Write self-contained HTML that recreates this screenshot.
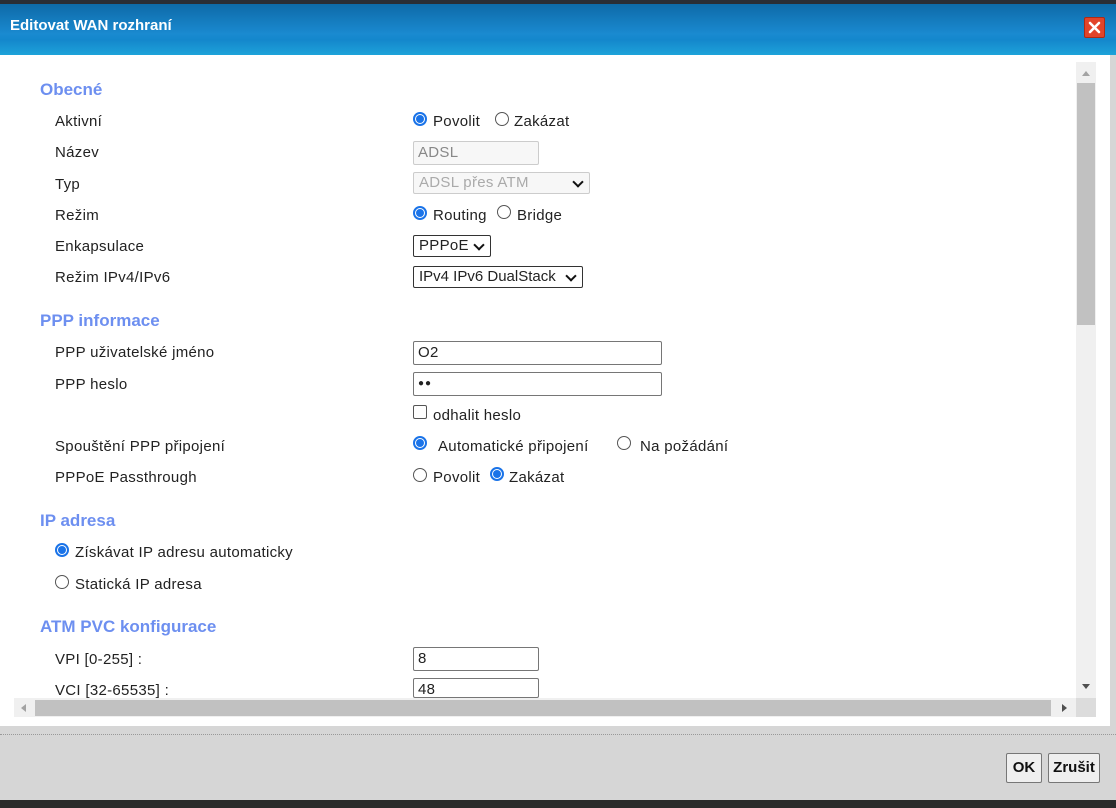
<!DOCTYPE html>
<html><head><meta charset="utf-8"><style>
*{margin:0;padding:0;box-sizing:border-box}
body{width:1116px;height:808px;position:relative;overflow:hidden;background:#d6d6d6;font-family:"Liberation Sans",sans-serif;font-size:15px;letter-spacing:0.3px;color:#222}
.a{position:absolute;white-space:nowrap}
.h{position:absolute;color:#6d8ff0;font-weight:bold;font-size:17px;letter-spacing:0}
.r{position:absolute;width:14px;height:14px;border:1px solid #555;border-radius:50%;background:#fff}
.r.on{border:2px solid #1a73e8}
.r.on::after{content:"";position:absolute;left:1px;top:1px;width:8px;height:8px;border-radius:50%;background:#1a73e8}
.in{position:absolute;height:24px;border:1px solid #767676;background:#fff;padding:2px 4px;line-height:18px;border-radius:2px}
.sel{position:absolute;height:22px;border:1px solid #333;background:#fff;padding:1px 5px;line-height:18px;border-radius:2px}
.sel::after{content:"";position:absolute;right:7px;top:5px;width:6px;height:6px;border-right:2px solid #111;border-bottom:2px solid #111;transform:rotate(45deg)}
.btn{position:absolute;height:30px;border:1px solid #777;background:#efefef;border-radius:2px;font-weight:bold;font-size:15px;letter-spacing:0;text-align:center;line-height:28px;color:#111}
</style></head><body>
<div class="a" style="left:0;top:0;width:1116px;height:4px;background:#2a2e36"></div>
<div class="a" style="left:0;top:4px;width:1116px;height:51px;background:linear-gradient(#0e6aa8 0,#1a8ad0 30px,#1487cc 36px,#1fa8dc 54px)"></div>
<div class="a" style="left:10px;top:17px;color:#fff;font-weight:bold;font-size:15px;letter-spacing:0">Editovat WAN rozhraní</div>
<div class="a" style="left:1084px;top:17px;width:21px;height:21px;background:#e2442a;border:1px solid #b02a14;border-radius:2px"><svg width="19" height="19" viewBox="0 0 19 19"><path d="M5 5L14 14M14 5L5 14" stroke="#fff" stroke-width="2.6" stroke-linecap="round"/></svg></div>
<div class="a" style="left:0;top:55px;width:1110px;height:671px;background:#fff"></div>
<div class="a" style="left:1076px;top:62px;width:20px;height:636px;background:#f0f0f0"></div>
<div class="a" style="left:1077px;top:83px;width:18px;height:242px;background:#c1c1c1"></div>
<div class="a" style="left:1082px;top:71px;border:4px solid transparent;border-bottom:5px solid #a3a3a3;border-top:0"></div>
<div class="a" style="left:1082px;top:684px;border:4px solid transparent;border-top:5px solid #505050;border-bottom:0"></div>
<div class="a" style="left:14px;top:698px;width:1062px;height:19px;background:#f0f0f0"></div>
<div class="a" style="left:35px;top:700px;width:1016px;height:16px;background:#c1c1c1"></div>
<div class="a" style="left:21px;top:704px;border:4px solid transparent;border-right:5px solid #a3a3a3;border-left:0"></div>
<div class="a" style="left:1062px;top:704px;border:4px solid transparent;border-left:5px solid #505050;border-right:0"></div>
<div class="a" style="left:1076px;top:698px;width:20px;height:19px;background:#dcdcdc"></div>
<div class="a" style="left:0;top:734px;width:1116px;border-top:1px dotted #999"></div>
<div class="a" style="left:0;top:800px;width:1116px;height:8px;background:#2b2b2b"></div>

<div class="h" style="left:40px;top:80px">Obecné</div>
<div class="a" style="left:55px;top:113px">Aktivní</div>
<div class="r on" style="left:413px;top:112px"></div><div class="a" style="left:433px;top:113px">Povolit</div>
<div class="r" style="left:495px;top:112px"></div><div class="a" style="left:514px;top:113px">Zakázat</div>
<div class="a" style="left:55px;top:144px">Název</div>
<div class="in" style="left:413px;top:141px;width:126px;background:#f7f7f7;border-color:#ccc;color:#888">ADSL</div>
<div class="a" style="left:55px;top:176px">Typ</div>
<div class="sel" style="left:413px;top:172px;width:177px;background:#f7f7f7;border-color:#ccc;color:#aaa">ADSL přes ATM</div>
<div class="a" style="left:55px;top:207px">Režim</div>
<div class="r on" style="left:413px;top:206px"></div><div class="a" style="left:433px;top:207px">Routing</div>
<div class="r" style="left:497px;top:205px"></div><div class="a" style="left:517px;top:207px">Bridge</div>
<div class="a" style="left:55px;top:238px">Enkapsulace</div>
<div class="sel" style="left:413px;top:235px;width:78px">PPPoE</div>
<div class="a" style="left:55px;top:269px">Režim IPv4/IPv6</div>
<div class="sel" style="left:413px;top:266px;width:170px;letter-spacing:0">IPv4 IPv6 DualStack</div>

<div class="h" style="left:40px;top:311px">PPP informace</div>
<div class="a" style="left:55px;top:344px">PPP uživatelské jméno</div>
<div class="in" style="left:413px;top:341px;width:249px">O2</div>
<div class="a" style="left:55px;top:376px">PPP heslo</div>
<div class="in" style="left:413px;top:372px;width:249px;font-size:10px;letter-spacing:1px">●●</div>
<div class="a" style="left:413px;top:405px;width:14px;height:14px;border:1px solid #555;border-radius:2px;background:#fff"></div>
<div class="a" style="left:433px;top:407px">odhalit heslo</div>
<div class="a" style="left:55px;top:438px">Spouštění PPP připojení</div>
<div class="r on" style="left:413px;top:436px"></div><div class="a" style="left:438px;top:438px">Automatické připojení</div>
<div class="r" style="left:617px;top:436px"></div><div class="a" style="left:640px;top:438px">Na požádání</div>
<div class="a" style="left:55px;top:469px">PPPoE Passthrough</div>
<div class="r" style="left:413px;top:468px"></div><div class="a" style="left:433px;top:469px">Povolit</div>
<div class="r on" style="left:490px;top:467px"></div><div class="a" style="left:509px;top:469px">Zakázat</div>

<div class="h" style="left:40px;top:511px">IP adresa</div>
<div class="r on" style="left:55px;top:543px"></div><div class="a" style="left:75px;top:544px">Získávat IP adresu automaticky</div>
<div class="r" style="left:55px;top:575px"></div><div class="a" style="left:75px;top:576px">Statická IP adresa</div>

<div class="h" style="left:40px;top:617px">ATM PVC konfigurace</div>
<div class="a" style="left:55px;top:651px">VPI [0-255] :</div>
<div class="in" style="left:413px;top:647px;width:126px">8</div>
<div class="a" style="left:55px;top:682px;height:16px;overflow:hidden">VCI [32-65535] :</div>
<div class="in" style="left:413px;top:678px;width:126px;height:20px;overflow:hidden">48</div>

<div class="btn" style="left:1006px;top:753px;width:36px">OK</div>
<div class="btn" style="left:1048px;top:753px;width:52px">Zrušit</div>
</body></html>
